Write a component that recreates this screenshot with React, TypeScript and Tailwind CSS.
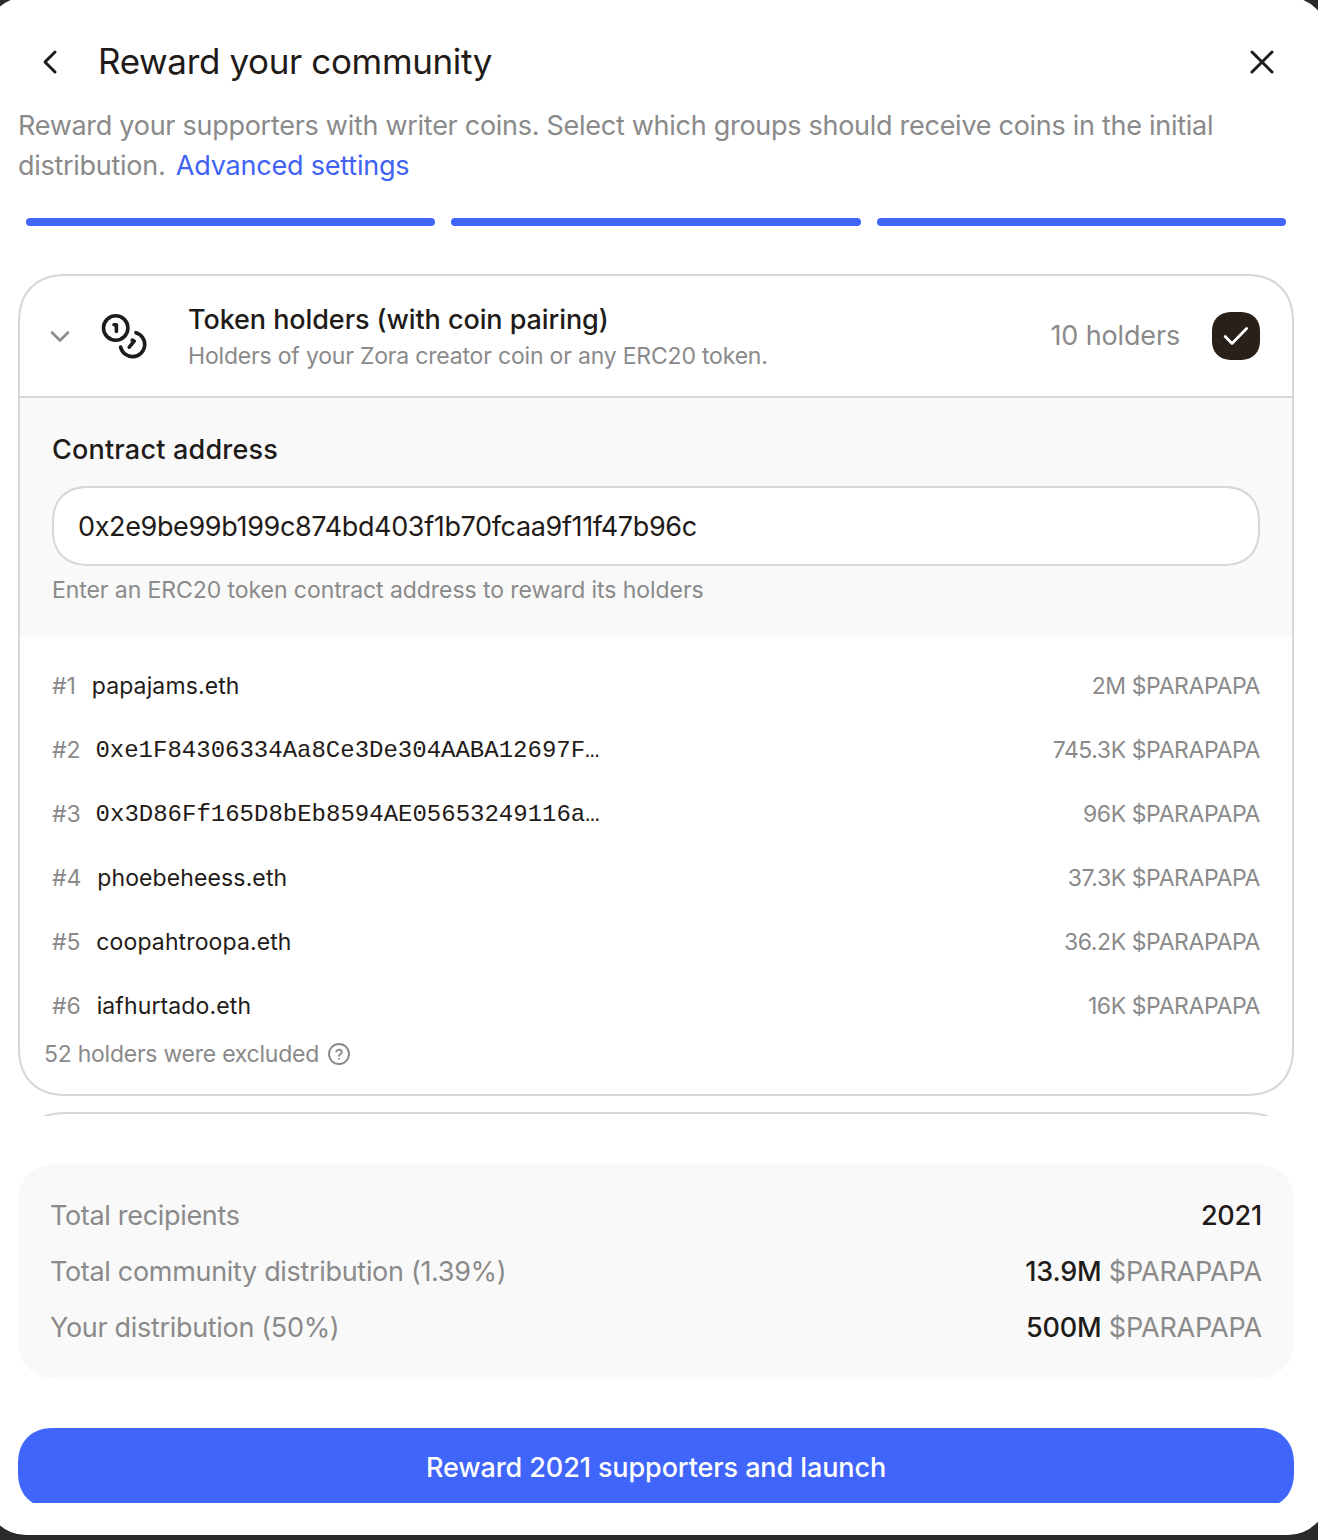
import { useState } from "react";

const holders = [
  { rank: 1, name: "papajams.eth", amount: "2M" },
  { rank: 2, name: "0xe1F84306334Aa8Ce3De304AABA12697F…", amount: "745.3K", mono: true },
  { rank: 3, name: "0x3D86Ff165D8bEb8594AE05653249116a…", amount: "96K", mono: true },
  { rank: 4, name: "phoebeheess.eth", amount: "37.3K" },
  { rank: 5, name: "coopahtroopa.eth", amount: "36.2K" },
  { rank: 6, name: "iafhurtado.eth", amount: "16K" },
];

export default function App() {
  const [checked, setChecked] = useState(true);
  const [address, setAddress] = useState("0x2e9be99b199c874bd403f1b70fcaa9f11f47b96c");

  return (
    <div className="h-[1540px] w-[1318px] overflow-hidden bg-[#2b2a2a] font-['Inter',sans-serif] text-[#1f1b18]">
      <div className="-mt-[3px] -mr-[10px] -ml-[14px] h-[1538px] rounded-[40px] bg-white pt-[3px] pr-[34px] pl-8">
        <header className="flex h-[106px] items-center pt-[18px] pr-[18px] pl-5">
          <button aria-label="Back">
            <BackIcon />
          </button>
          <h1 className="ml-[36px] flex-1 pb-[2px] text-[35px] leading-[44px] tracking-[-0.36px]">Reward your community</h1>
          <button aria-label="Close">
            <CloseIcon />
          </button>
        </header>

        <p className="text-[27px] leading-[40px] tracking-[-0.28px] text-[#8a8a8a]">
          Reward your supporters with writer coins. Select which groups should receive coins in the initial distribution.{" "}
          <a href="#" className="ml-[3px] tracking-[-0.2px] text-[#3f63f6]">Advanced settings</a>
        </p>

        <div className="mt-8 grid grid-cols-3 gap-4 px-2">
          <div className="h-2 rounded-full bg-[#4065fa]" />
          <div className="h-2 rounded-full bg-[#4065fa]" />
          <div className="h-2 rounded-full bg-[#4065fa]" />
        </div>

        <div className="mt-12 h-[842px] overflow-hidden">
          <section className="h-[822px] overflow-hidden rounded-[48px] border-2 border-[#d7d7d7] [corner-shape:superellipse(1.2)]">
            <div className="flex h-[122px] items-center border-b-2 border-[#d7d7d7] pr-8 pl-[29px]">
              <ChevronIcon />
              <CoinsIcon />
              <div className="ml-10 flex-1 pt-[2px]">
                <h2 className="text-[27px] leading-[38px] font-medium tracking-[-0.08px]">Token holders (with coin pairing)</h2>
                <p className="text-[23px] leading-[34px] tracking-[-0.19px] text-[#8a8a8a]">
                  Holders of your Zora creator coin or any ERC20 token.
                </p>
              </div>
              <span className="mr-8 text-[27px] tracking-[-0.15px] text-[#8a8a8a]">10 holders</span>
              <button
                aria-label="Include token holders"
                onClick={() => setChecked(!checked)}
                className="flex size-12 items-center justify-center rounded-[20px] bg-[#28201b] [corner-shape:superellipse(1.2)]"
              >
                {checked && <CheckIcon />}
              </button>
            </div>

            <div className="h-[239px] bg-[#f9f9f9] px-8 pt-8">
              <label className="block text-[27px] leading-[40px] font-medium tracking-[0.2px]">Contract address</label>
              <input
                value={address}
                onChange={(e) => setAddress(e.target.value)}
                className="mt-4 block h-[80px] w-full rounded-[36px] border-2 border-[#d7d7d7] bg-white px-6 text-[27px] tracking-[-0.36px] outline-none [corner-shape:superellipse(1.2)]"
              />
              <p className="mt-2 text-[23px] leading-[32px] tracking-[-0.07px] text-[#8a8a8a]">
                Enter an ERC20 token contract address to reward its holders
              </p>
            </div>

            <ul className="px-8 pt-[17px]">
              {holders.map((h) => (
                <li key={h.rank} className="flex h-[64px] items-center text-[23px]">
                  <span className="mr-4 tracking-[-0.1px] text-[#8a8a8a]">#{h.rank}</span>
                  {h.mono ? (
                    <span className="-ml-px pt-[2px] font-['Liberation_Mono',monospace] text-[24px]">{h.name}</span>
                  ) : (
                    <span className="tracking-[0.12px]">{h.name}</span>
                  )}
                  <span className="ml-auto tracking-[-0.42px] text-[#8a8a8a]">{h.amount} $PARAPAPA</span>
                </li>
              ))}
            </ul>

            <div className="flex h-8 items-center gap-2 pl-6 text-[23px] tracking-[-0.25px] text-[#8a8a8a]">
              52 holders were excluded
              <HelpIcon />
            </div>
          </section>

          <section className="mt-4 h-[122px] rounded-[48px] border-2 border-[#d7d7d7] [corner-shape:superellipse(1.2)]" />
        </div>

        <dl className="mt-12 h-[215px] rounded-[40px] bg-[#f9f9f9] px-8 pt-6 text-[27px] [corner-shape:superellipse(1.2)]">
          <SummaryRow label="Total recipients" value="2021" />
          <SummaryRow label="Total community distribution (1.39%)" value="13.9M" unit="$PARAPAPA" />
          <SummaryRow label="Your distribution (50%)" value="500M" unit="$PARAPAPA" />
        </dl>

        <div className="mt-[49px] h-[75px] overflow-hidden">
          <button className="h-[80px] w-full rounded-[36px] bg-[#4065fa] text-[27px] font-medium tracking-[-0.1px] text-white [corner-shape:superellipse(1.2)]">
            Reward 2021 supporters and launch
          </button>
        </div>
      </div>
    </div>
  );
}

function SummaryRow({ label, value, unit }: { label: string; value: string; unit?: string }) {
  return (
    <div className="flex h-14 items-center justify-between">
      <dt className="tracking-[-0.32px] text-[#8a8a8a]">{label}</dt>
      <dd className="font-medium tracking-[-0.2px]">
        {value}
        {unit && <span className="font-normal text-[#8a8a8a]"> {unit}</span>}
      </dd>
    </div>
  );
}

function BackIcon() {
  return (
    <svg className="h-[28px] w-[24px]" viewBox="0 0 24 28" fill="none" stroke="currentColor" strokeWidth="3" strokeLinecap="round" strokeLinejoin="round">
      <path d="M17 4 7 14l10 10" />
    </svg>
  );
}

function CloseIcon() {
  return (
    <svg className="size-[28px]" viewBox="0 0 28 28" fill="none" stroke="currentColor" strokeWidth="3" strokeLinecap="round">
      <path d="m4 4 20 20M24 4 4 24" />
    </svg>
  );
}

function ChevronIcon() {
  return (
    <svg className="h-[24px] w-[22px]" viewBox="0 0 22 24" fill="none" stroke="#8a8a8a" strokeWidth="2.5" strokeLinecap="round" strokeLinejoin="round">
      <path d="m3 8.5 8 8 8-8" />
    </svg>
  );
}

function CoinsIcon() {
  return (
    <svg className="ml-[29px] size-12" viewBox="0 0 48 48" fill="none" stroke="currentColor" strokeWidth="3.6" strokeLinecap="round" strokeLinejoin="round">
      <circle cx="15.7" cy="16" r="12.2" />
      <path d="M14 12.7h2.4v6.7" />
      <path d="M36 20.7A12.2 12.2 0 1 1 20.6 35" />
      <path d="m32.2 28.2 2 1-5 6" />
    </svg>
  );
}

function CheckIcon() {
  return (
    <svg className="size-8" viewBox="0 0 32 32" fill="none" stroke="white" strokeWidth="2.8" strokeLinecap="round" strokeLinejoin="round">
      <path d="m5.2 16.6 6.8 6.8L26.6 8.6" />
    </svg>
  );
}

function HelpIcon() {
  return (
    <svg className="size-[24px]" viewBox="0 0 24 24" fill="none" stroke="currentColor" strokeWidth="1.9" strokeLinecap="round" strokeLinejoin="round">
      <circle cx="12" cy="12" r="10" />
      <path d="M9.2 9.6a2.9 2.9 0 0 1 5.6.7c0 1.7-2.8 1.9-2.8 3.5" />
      <path d="M12 17h.01" />
    </svg>
  );
}
